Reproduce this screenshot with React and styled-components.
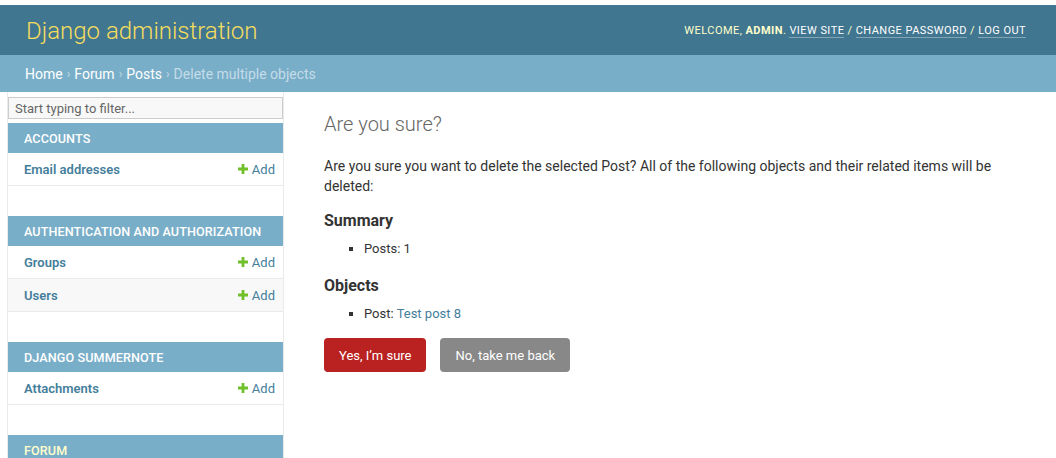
import React from 'react';
import styled, { createGlobalStyle } from 'styled-components';

const GlobalStyle = createGlobalStyle`
  html, body {
    margin: 0;
    padding: 0;
    background: #fff;
    font-family: Roboto, "Liberation Sans", sans-serif;
    color: #333;
    font-size: 14px;
  }
`;

const Page = styled.div`
  padding-top: 5px;
  height: 453px;
  overflow: hidden;
`;

const Header = styled.div`
  height: 50px;
  background: #417690;
  color: #ffc;
  display: flex;
  align-items: center;
  justify-content: space-between;
  padding: 0 30px 0 26px;
`;

const Branding = styled.h1`
  margin: 0;
  padding-top: 2px;
  font-size: 24px;
  font-weight: 300;
  color: #f5dd5d;
`;

const UserTools = styled.div`
  font-size: 11px;
  letter-spacing: 0.45px;
  text-transform: uppercase;
  color: #ffc;
  padding-top: 1px;

  strong {
    font-weight: 700;
  }
`;

const ToolLink = styled.a`
  color: #fff;
  text-decoration: none;
  border-bottom: 1px solid rgba(255, 255, 255, 0.35);
`;

const Breadcrumbs = styled.div`
  height: 37px;
  box-sizing: border-box;
  padding: 0 25px;
  background: #79aec8;
  color: #c4dce8;
  display: flex;
  align-items: center;
  font-size: 14px;
`;

const Crumb = styled.a`
  color: #fff;
  text-decoration: none;
`;

const Sep = styled.span`
  margin: 0 4px;
  font-size: 12px;
`;

const Body = styled.div`
  display: flex;
`;

const Sidebar = styled.div`
  margin-left: 7px;
  width: 275px;
  flex-shrink: 0;
  border-left: 1px solid #eaeaea;
  border-right: 1px solid #eaeaea;
  min-height: 400px;
`;

const Filter = styled.div`
  margin: 5px 0 4px;
  height: 22px;
  box-sizing: border-box;
  border: 1px solid #ccc;
  background: #f8f8f8;
  color: #666;
  font-size: 13px;
  display: flex;
  align-items: center;
  padding-left: 6px;
`;

const Module = styled.div`
  margin-bottom: 30px;
`;

const Caption = styled.div`
  height: 30px;
  box-sizing: border-box;
  background: #79aec8;
  color: ${p => (p.$current ? '#ffc' : '#fff')};
  font-size: 12.6px;
  font-weight: 500;
  letter-spacing: 0.1px;
  text-transform: uppercase;
  display: flex;
  align-items: center;
  padding-left: 16px;
`;

const Row = styled.div`
  height: 33px;
  box-sizing: border-box;
  border-bottom: 1px solid #eaeaea;
  background: ${p => (p.$alt ? '#f8f8f8' : '#fff')};
  display: flex;
  align-items: center;
  justify-content: space-between;
  padding: 0 8px 0 16px;
  font-size: 13px;
`;

const ModelLink = styled.a`
  color: #447e9b;
  font-weight: 600;
  text-decoration: none;
`;

const AddLink = styled.a`
  color: #447e9b;
  text-decoration: none;
  display: flex;
  align-items: center;
  gap: 4px;
`;

const Content = styled.div`
  flex: 1;
  padding: 20px 40px;
`;

const Title = styled.h1`
  margin: 0 0 20px;
  font-size: 20px;
  font-weight: 300;
  color: #666;
  line-height: 24px;
`;

const Para = styled.p`
  margin: 0;
  line-height: 20px;
  font-size: 14px;
`;

const SubTitle = styled.h2`
  margin: 15px 0 8px;
  font-size: 16px;
  font-weight: 700;
  line-height: 20px;
  color: #333;
`;

const List = styled.ul`
  margin: 0;
  padding: 0 0 2px 40px;
  font-size: 13px;

  li {
    list-style-type: square;
    line-height: 20px;
  }
`;

const ObjLink = styled.a`
  color: #447e9b;
  text-decoration: none;
`;

const Actions = styled.div`
  margin-top: 12px;
  display: flex;
  gap: 14px;
`;

const Button = styled.button`
  border: none;
  border-radius: 4px;
  height: 34px;
  padding: 0 15px;
  font-family: Roboto, "Liberation Sans", sans-serif;
  font-size: 13px;
  color: #fff;
  background: ${p => (p.$danger ? '#ba2121' : '#888')};
  cursor: pointer;
`;

const Plus = () => (
  <svg width="10" height="10" viewBox="0 0 10 10">
    <path d="M3.6 0h2.8v3.6H10v2.8H6.4V10H3.6V6.4H0V3.6h3.6z" fill="#70bf2b" />
  </svg>
);

const modules = [
  { name: 'Accounts', models: ['Email addresses'] },
  { name: 'Authentication and Authorization', models: ['Groups', 'Users'] },
  { name: 'Django Summernote', models: ['Attachments'] },
  { name: 'Forum', models: ['Posts'], current: true },
];

export default function App() {
  return (
    <Page>
      <GlobalStyle />
      <Header>
        <Branding>Django administration</Branding>
        <UserTools>
          Welcome, <strong>admin</strong>. <ToolLink>View site</ToolLink> / <ToolLink>Change password</ToolLink> / <ToolLink>Log out</ToolLink>
        </UserTools>
      </Header>
      <Breadcrumbs>
        <Crumb>Home</Crumb><Sep>›</Sep>
        <Crumb>Forum</Crumb><Sep>›</Sep>
        <Crumb>Posts</Crumb><Sep>›</Sep>
        Delete multiple objects
      </Breadcrumbs>
      <Body>
        <Sidebar>
          <Filter>Start typing to filter...</Filter>
          {modules.map(m => (
            <Module key={m.name}>
              <Caption $current={m.current}>{m.name}</Caption>
              {m.models.map((model, i) => (
                <Row key={model} $alt={i % 2 === 1}>
                  <ModelLink>{model}</ModelLink>
                  <AddLink><Plus />Add</AddLink>
                </Row>
              ))}
            </Module>
          ))}
        </Sidebar>
        <Content>
          <Title>Are you sure?</Title>
          <Para>
            Are you sure you want to delete the selected Post? All of the following objects and their related items will be deleted:
          </Para>
          <SubTitle>Summary</SubTitle>
          <List>
            <li>Posts: 1</li>
          </List>
          <SubTitle>Objects</SubTitle>
          <List>
            <li>Post: <ObjLink>Test post 8</ObjLink></li>
          </List>
          <Actions>
            <Button $danger>Yes, I’m sure</Button>
            <Button>No, take me back</Button>
          </Actions>
        </Content>
      </Body>
    </Page>
  );
}
